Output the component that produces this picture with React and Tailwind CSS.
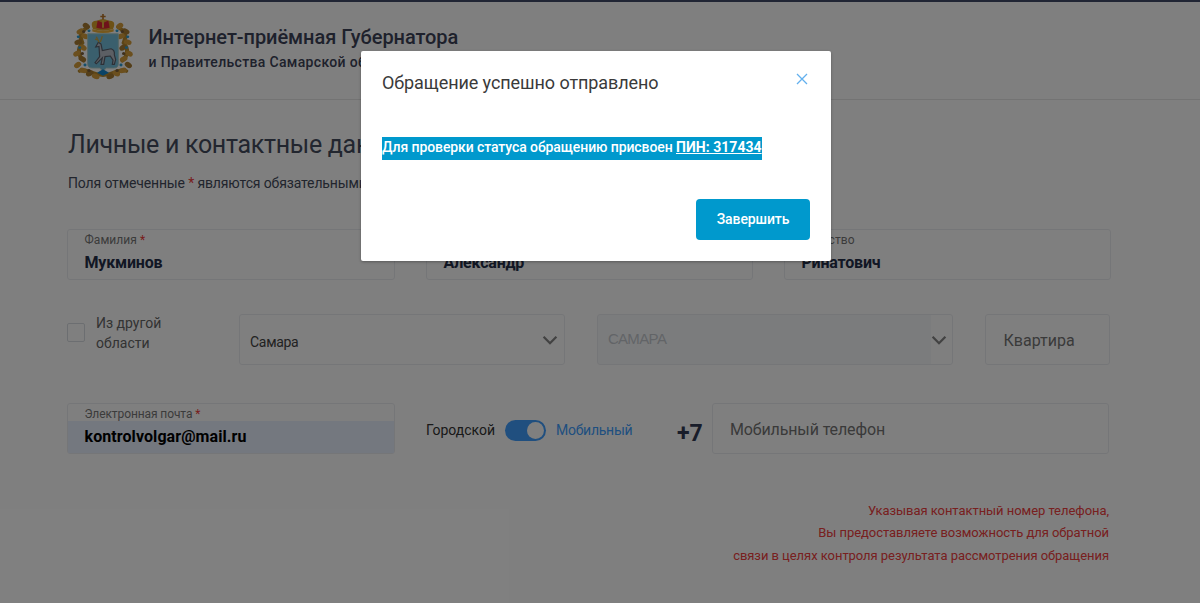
import React from "react";

const Emblem = () => (
  <svg viewBox="0 0 90 110" className="h-[66px] w-[60px]" preserveAspectRatio="none">
    <g fill="none" stroke="#b98a2e" strokeLinecap="round">
      <path d="M22 22 C10 30 10 38 14 48 C6 58 8 70 16 78" strokeWidth="6" />
      <path d="M68 22 C80 30 80 38 76 48 C84 58 82 70 74 78" strokeWidth="6" />
      <path d="M10 95 C20 90 28 101 45 102 C62 101 70 90 80 95" strokeWidth="6" />
    </g>
    {[
      [20, 20, 40], [11, 29, -30], [18, 37, 30], [8, 47, -20], [15, 56, 40], [6, 66, -30], [14, 75, 30], [7, 85, -40],
      [15, 94, 20], [25, 99, -30], [34, 104, 20], [70, 20, -40], [79, 29, 30], [72, 37, -30], [82, 47, 20], [75, 56, -40],
      [84, 66, 30], [76, 75, -30], [83, 85, 40], [75, 94, -20], [65, 99, 30], [56, 104, -20],
    ].map(([x, y, r], i) => (
      <ellipse key={i} cx={x} cy={y} rx="6" ry="4.3" transform={`rotate(${r} ${x} ${y})`} fill={i % 3 ? "#d69f3c" : "#a97c32"} />
    ))}
    {[[24, 28], [66, 28], [10, 56], [80, 56], [18, 85], [72, 85], [8, 38], [82, 38]].map(([x, y], i) => (
      <circle key={i} cx={x} cy={y} r="2.3" fill="#2b9fd6" />
    ))}
    {[[14, 66], [76, 66], [16, 29], [74, 29], [24, 94], [66, 94]].map(([x, y], i) => (
      <circle key={i} cx={x} cy={y} r="2.5" fill="#7d5f3a" />
    ))}
    <path d="M22 33 H68 V83 Q68 90 61 90 H50 L45 95 L40 90 H29 Q22 90 22 83 Z" fill="#74bedb" stroke="#a9cdc9" strokeWidth="1.5" />
    <path d="M36 98 L45 92 L54 98 L45 103 Z" fill="#1687cc" />
    <path d="M38 47 L42 50 L44 61 L57 58 Q63 60 62 68 L64 76 L62 84 H59 L60 77 L56 70 L48 71 L46 84 H42 L44 73 L35 83 L33 81 L40 71 L39 54 L34 55 Z" fill="#b9bec9" stroke="#59606c" strokeWidth="1.8" />
    <path d="M39 47 L35 38 M41 47 L44 37 M37 43 L33 42" fill="none" stroke="#c9a445" strokeWidth="2" />
    <path d="M30 25 Q24 11 37 11 Q45 6 53 11 Q66 11 60 25 Q45 31 30 25 Z" fill="#dba22b" />
    <path d="M35 23 L37 11 L45 15 L53 11 L55 23 Q45 26 35 23 Z" fill="#dd2634" />
    <path d="M45 9 V23" stroke="#e5b43c" strokeWidth="3" />
    <path d="M45 0 V9 M41 4 H49" stroke="#b9772c" strokeWidth="2.5" />
    <path d="M29 25 Q45 31 61 25 V29 Q45 34 29 29 Z" fill="#edb13a" />
  </svg>
);

const Chevron = () => (
  <svg viewBox="0 0 16 10" className="h-[10px] w-4 shrink-0" fill="none" stroke="#858585" strokeWidth="2.3">
    <path d="M1.6 1.8 L8 8.2 L14.4 1.8" />
  </svg>
);

const Star = () => <span className="text-[#f03a3a]">*</span>;

const box = "rounded-[3px] border border-[#ebedf0]";

const NameField = ({ label, required, value }) => (
  <div className={`${box} h-[51px] pl-[16.5px]`}>
    <div className="mt-[3px] text-[12px] leading-[14px] tracking-[0.05px] text-[#777]">
      {label} {required && <Star />}
    </div>
    <div className="mt-[6px] text-[16px] leading-5 font-bold tracking-[-0.2px] text-[#242e49]">{value}</div>
  </div>
);

export default function App() {
  return (
    <div className="relative h-[603px] w-[1200px] overflow-hidden bg-white font-['Roboto','Liberation_Sans',sans-serif] whitespace-nowrap text-[#444b5b]">
      <header className="flex h-[100px] border-t-2 border-b border-t-[#414b69] border-b-[#e6e6e6] pl-[73px]">
        <div className="pt-[12px]"><Emblem /></div>
        <div className="pt-[23px] pl-[15.5px] text-[#3c4358]">
          <div className="text-[20px] leading-6 font-medium tracking-[-0.05px]">Интернет-приёмная Губернатора</div>
          <div className="mt-[3px] text-[14px] leading-5 font-medium tracking-[0.33px]">и Правительства Самарской области</div>
        </div>
      </header>

      <main className="pl-[67px]">
        <h1 className="mt-[29px] pl-px text-[25px] leading-8 tracking-[-0.3px] text-[#454c5e]">Личные и контактные данные</h1>
        <p className="mt-[12px] pl-px text-[14px] leading-5 tracking-[-0.14px]">
          Поля отмеченные <Star /> являются обязательными для заполнения
        </p>

        <div className="mt-[36px] flex">
          <div className="w-[328px]"><NameField label="Фамилия" required value="Мукминов" /></div>
          <div className="ml-[31px] w-[327px]"><NameField label="Имя" required value="Александр" /></div>
          <div className="ml-[31px] w-[327px]"><NameField label="Отчество" value="Ринатович" /></div>
        </div>

        <div className="mt-[34px] flex h-[51px]">
          <div className="flex w-[172px]">
            <span className="mt-[9px] h-[19px] w-[18px] rounded-[2px] border border-[#d9dde2]" />
            <span className="-mt-[1px] ml-[11px] text-[14px] leading-[20px] text-[#666]">Из другой<br />области</span>
          </div>
          <div className={`${box} flex w-[326px] items-center justify-between pr-[6px] pl-[10px]`}>
            <span className="pt-[5px] text-[14px] tracking-[-0.3px] text-[#444]">Самара</span>
            <Chevron />
          </div>
          <div className={`${box} ml-[32px] flex w-[356px] items-center justify-between bg-[linear-gradient(90deg,#f7f9fb_0,#f7f9fb_333px,#fff_333px)] pr-[5px] pl-[10px]`}>
            <span className="font-['Liberation_Sans'] text-[15px] tracking-[-0.6px] text-[#c5c9cf]">САМАРА</span>
            <Chevron />
          </div>
          <div className={`${box} ml-[32px] flex w-[125px] items-center pt-[2px] pl-[17.5px]`}>
            <span className="text-[16px] text-[#757575]">Квартира</span>
          </div>
        </div>

        <div className="mt-[38px] flex h-[51px]">
          <div className={`${box} w-[328px]`}>
            <div className="h-[17px] pt-[3px] pl-[16.5px] text-[12px] leading-[14px] tracking-[-0.1px] text-[#777]">Электронная почта <Star /></div>
            <div className="flex h-8 items-center bg-[#e8f0fe] pl-[16.5px] text-[16px] font-bold tracking-[0.08px] text-black">kontrolvolgar@mail.ru</div>
          </div>
          <div className="ml-[31px] flex w-[251px] items-center pt-[3px] text-[14px]">
            <span className="w-[79px] text-[#333]">Городской</span>
            <span className="flex h-[21px] w-[41px] items-center justify-end rounded-full bg-[#409eff] pr-[2px]">
              <span className="size-[17px] rounded-full bg-white" />
            </span>
            <span className="ml-[10px] tracking-[-0.25px] text-[#409eff]">Мобильный</span>
          </div>
          <div className="flex w-[35px] items-center pt-[11px] text-[23px] font-bold text-[#333a54]">+7</div>
          <div className={`${box} flex w-[397px] items-center pt-[2px] pl-[17px]`}>
            <span className="text-[16px] tracking-[-0.12px] text-[#757575]">Мобильный телефон</span>
          </div>
        </div>

        <div className="mt-[46px] w-[1042px] text-right text-[13px] leading-[22.3px] tracking-[-0.05px] text-[#f04040]">
          Указывая контактный номер телефона,<br />
          Вы предоставляете возможность для обратной<br />
          связи в целях контроля результата рассмотрения обращения
        </div>
      </main>

      <div className="absolute inset-0 flex items-start bg-black/50 pt-[51px] pl-[361px]">
        <section className="flex h-[210px] w-[470px] flex-col rounded-[2px] bg-white px-[21px] shadow-[0_1px_3px_rgba(0,0,0,0.3)]">
          <div className="flex items-start justify-between">
            <h2 className="pt-[20px] text-[18px] leading-6 tracking-[-0.08px] text-[#3a3a3a]">Обращение успешно отправлено</h2>
            <svg viewBox="0 0 12 12" className="mt-[22px] mr-[2px] size-[12px]" fill="none" stroke="#62b0ee" strokeWidth="1.3">
              <path d="M1 1 L11 11 M11 1 L1 11" />
            </svg>
          </div>
          <div className="mt-[42px] flex">
            <p className="h-[23px] w-[380px] bg-[#0099cd] text-[14px] leading-[21px] font-medium tracking-[-0.09px] text-white">
              Для проверки статуса обращению присвоен <b className="tracking-[0.04px] underline">ПИН: 317434</b>
            </p>
          </div>
          <button className="mt-[39px] h-[41px] w-[114px] self-end rounded-[4px] bg-[#0099cd] text-[14px] font-medium tracking-[-0.1px] text-white">Завершить</button>
        </section>
      </div>
    </div>
  );
}
